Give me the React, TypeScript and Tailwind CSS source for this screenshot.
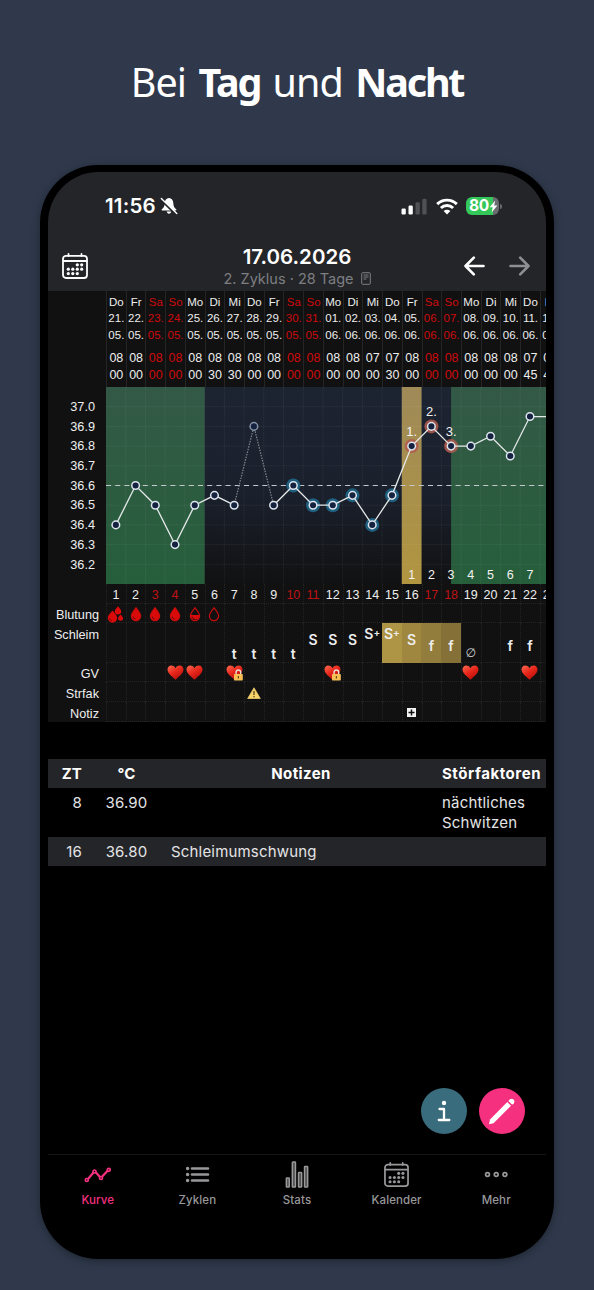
import { Fragment } from "react"

type Day = {
    day: number;
    name: string;
    date: string;
    month: string;
    hour: string;
    minute: string;
    temp: number;
    halo?: "blue" | "red";
    blood?: "heavy" | "full" | "half" | "empty";
    mucus?: string;
    mucusBg?: string;
    sex?: "heart" | "locked";
    high?: number;
}

const COL = 19.72

const days: Day[] = [
    { day: 1, name: "Do", date: "21.", month: "05.", hour: "08", minute: "00", temp: 36.4, blood: "heavy" },
    { day: 2, name: "Fr", date: "22.", month: "05.", hour: "08", minute: "00", temp: 36.6, blood: "full" },
    { day: 3, name: "Sa", date: "23.", month: "05.", hour: "08", minute: "00", temp: 36.5, blood: "full" },
    { day: 4, name: "So", date: "24.", month: "05.", hour: "08", minute: "00", temp: 36.3, blood: "full", sex: "heart" },
    { day: 5, name: "Mo", date: "25.", month: "05.", hour: "08", minute: "00", temp: 36.5, blood: "half", sex: "heart" },
    { day: 6, name: "Di", date: "26.", month: "05.", hour: "08", minute: "30", temp: 36.55, blood: "empty" },
    { day: 7, name: "Mi", date: "27.", month: "05.", hour: "08", minute: "30", temp: 36.5, mucus: "t", sex: "locked" },
    { day: 8, name: "Do", date: "28.", month: "05.", hour: "08", minute: "00", temp: 36.9, mucus: "t" },
    { day: 9, name: "Fr", date: "29.", month: "05.", hour: "08", minute: "00", temp: 36.5, mucus: "t" },
    { day: 10, name: "Sa", date: "30.", month: "05.", hour: "08", minute: "00", temp: 36.6, halo: "blue", mucus: "t" },
    { day: 11, name: "So", date: "31.", month: "05.", hour: "08", minute: "00", temp: 36.5, halo: "blue", mucus: "S" },
    { day: 12, name: "Mo", date: "01.", month: "06.", hour: "08", minute: "00", temp: 36.5, halo: "blue", mucus: "S", sex: "locked" },
    { day: 13, name: "Di", date: "02.", month: "06.", hour: "08", minute: "00", temp: 36.55, halo: "blue", mucus: "S" },
    { day: 14, name: "Mi", date: "03.", month: "06.", hour: "07", minute: "00", temp: 36.4, halo: "blue", mucus: "S+" },
    { day: 15, name: "Do", date: "04.", month: "06.", hour: "07", minute: "30", temp: 36.55, halo: "blue", mucus: "S+", mucusBg: "bg-[#ae9445]" },
    { day: 16, name: "Fr", date: "05.", month: "06.", hour: "08", minute: "00", temp: 36.8, halo: "red", mucus: "S", mucusBg: "bg-[#9f873f]", high: 1 },
    { day: 17, name: "Sa", date: "06.", month: "06.", hour: "08", minute: "00", temp: 36.9, halo: "red", mucus: "f", mucusBg: "bg-[#937d3c]", high: 2 },
    { day: 18, name: "So", date: "07.", month: "06.", hour: "08", minute: "00", temp: 36.8, halo: "red", mucus: "f", mucusBg: "bg-[#857138]", high: 3 },
    { day: 19, name: "Mo", date: "08.", month: "06.", hour: "08", minute: "00", temp: 36.8, mucus: "∅", sex: "heart", high: 4 },
    { day: 20, name: "Di", date: "09.", month: "06.", hour: "08", minute: "00", temp: 36.85, high: 5 },
    { day: 21, name: "Mi", date: "10.", month: "06.", hour: "08", minute: "00", temp: 36.75, mucus: "f", high: 6 },
    { day: 22, name: "Do", date: "11.", month: "06.", hour: "07", minute: "45", temp: 36.95, mucus: "f", sex: "heart", high: 7 },
    { day: 23, name: "Fr", date: "12.", month: "06.", hour: "07", minute: "45", temp: 36.95 },
]

const mucusPos: Record<string, string> = {
    "S+": "pt-[1px]",
    S: "pt-[7px]",
    f: "pt-[13px]",
    t: "pt-[21px]",
    "∅": "pt-[21px]",
}

const temps = ["37.0", "36.9", "36.8", "36.7", "36.6", "36.5", "36.4", "36.3", "36.2"]

const px = (day: number) => (day - 0.5) * COL
const py = (temp: number) => (37.1 - temp) * 197

const isWeekend = (d: Day) => d.name === "Sa" || d.name === "So"

const CalendarIcon = ({ className }: { className: string }) => (
    <svg viewBox="0 0 26 26" className={className} fill="none" stroke="currentColor" strokeWidth="1.8" strokeLinecap="round">
        <rect x="1" y="2.8" width="24" height="22.2" rx="3" />
        <path d="M1.5 8H24.5M6.5 1v2M19.5 1v2" />
        <g fill="currentColor" stroke="none">
            {[[15.3, 11.8], [19.7, 11.8], [6.3, 16.2], [10.8, 16.2], [15.3, 16.2], [19.7, 16.2], [6.3, 20.6], [10.8, 20.6], [15.3, 20.6]].map(([x, y]) => (
                <circle key={`${x}-${y}`} cx={x} cy={y} r="1.6" />
            ))}
        </g>
    </svg>
)

const DROP = "M6 .8C7.5 3.2 10.6 6 10.6 9a4.6 4.6 0 0 1-9.2 0C1.4 6 4.5 3.2 6 .8Z"

const Blood = ({ kind }: { kind: string }) => {
    if (kind === "heavy") {
        return (
            <svg viewBox="0 0 17 17" className="w-[17px] h-[17px] shrink-0" fill="#db0a0a">
                <path d="M5.5 4.5C6.8 6.5 10.2 9 10.2 12a4.7 4.7 0 0 1-9.4 0C.8 9 4.2 6.5 5.5 4.5Z" />
                <path d="M11 .3c.8 1.4 3.2 2.9 3.2 4.9a3.2 3.2 0 0 1-6.4 0C7.8 3.2 10.2 1.7 11 .3Z" />
                <path d="M13.6 8.4c.7 1.1 2.5 2.2 2.5 3.8a2.5 2.5 0 0 1-5 0c0-1.6 1.8-2.7 2.5-3.8Z" />
                <path d="M2.7 12.2a2.6 2.6 0 0 0 2.3 2.6" fill="none" stroke="#6b0a0a" strokeWidth=".8" />
            </svg>
        )
    }
    return (
        <svg viewBox="0 0 12 15" className="w-[12px] h-[15px] shrink-0">
            <path d={DROP} fill={kind === "full" ? "#db0a0a" : "none"} stroke="#c90c0c" strokeWidth="1.2" />
            {kind === "half" && <path d="M1.4 8h9.2a4.6 4.6 0 1 1-9.2 0Z" fill="#db0a0a" />}
            {kind !== "empty" && <path d="M3.2 9.5a2.8 2.8 0 0 0 2.3 2.5" fill="none" stroke="#5f0a0a" strokeWidth=".9" />}
        </svg>
    )
}

const Heart = ({ locked }: { locked: boolean }) => (
    <svg viewBox="0 0 17 16" className="w-[17px] h-[16px] shrink-0">
        <defs>
            <linearGradient id="heart" x1="0" y1="0" x2="0.7" y2="1">
                <stop offset="0" stopColor="#ff6a52" />
                <stop offset=".5" stopColor="#e8281c" />
                <stop offset="1" stopColor="#b50d0a" />
            </linearGradient>
        </defs>
        <path d="M8.5 3.2C9.6 1.2 11.3.6 12.8.6c2.200 0 3.700 1.700 3.700 4 0 4.200-5.200 7.400-8 10.200C5.700 12 .5 8.800.5 4.600c0-2.300 1.500-4 3.700-4 1.500 0 3.200.6 4.300 2.600Z" fill="url(#heart)" />
        {locked && (
            <>
                <path d="M10.100 9.500V7.300a2.300 2.300 0 0 1 4.600 0v2.200" fill="none" stroke="#e9dcd0" strokeWidth="1.4" />
                <rect x="8" y="9" width="8.8" height="6.5" rx=".7" fill="#f8bf55" />
                <path d="M12.400 11v2.400" stroke="#6b4a10" strokeWidth="1.2" />
            </>
        )}
    </svg>
)

const Header = () => (
    <div className="h-[119px] bg-[#242528] text-white">
        <div className="h-[66px] flex items-center justify-between pl-[57px] pr-[47px] pt-[2px]">
            <div className="flex items-center gap-[4px]">
                <span className="text-[20.5px] font-semibold tracking-[0.2px]">11:56</span>
                <svg viewBox="0 0 18 18" className="w-[18px] h-[18px]">
                    <path d="M9 1C6.500 1.200 4.800 3 4.700 6c-.1 3.500-1.200 4.900-2.900 6.300-.4.400-.3 1.200.5 1.200h13.400c.8 0 .9-.8.500-1.200-1.700-1.400-2.800-2.800-2.900-6.300-.1-3-1.800-4.800-4.300-5ZM6.600 14.600c.3 1.200 1.200 2.100 2.400 2.100s2.100-.9 2.400-2.100Z" fill="#fff" />
                    <path d="M1.600 3.400 15.400 16.700" stroke="#242528" strokeWidth="2.2" />
                    <path d="M1.300 1.600 16.800 16.500" stroke="#fff" strokeWidth="1.4" strokeLinecap="round" />
                </svg>
            </div>
            <div className="flex items-center">
                <svg viewBox="0 0 26 17" className="w-[26px] h-[17px]">
                    <rect x="0.5" y="10.5" width="4.3" height="6" rx="1.2" fill="#fff" />
                    <rect x="7.5" y="7.5" width="4.3" height="9" rx="1.2" fill="#fff" />
                    <rect x="14.5" y="4.2" width="4.3" height="12.3" rx="1.2" fill="#505154" />
                    <rect x="21.3" y="0.8" width="4.3" height="15.7" rx="1.2" fill="#505154" />
                </svg>
                <svg viewBox="0 0 22 17" className="w-[22px] h-[17px] ml-[9px]" fill="none" stroke="#fff" strokeWidth="2.9">
                    <path d="M1.2 6.1a14 14 0 0 1 19.6 0" />
                    <path d="M4.9 10a8.7 8.7 0 0 1 12.2 0" />
                    <path d="M11 16.5 7.6 13.1a4.9 4.9 0 0 1 6.8 0Z" fill="#fff" stroke="none" />
                </svg>
                <div className="ml-[8px] relative w-[33px] h-[18px] rounded-[6px] bg-gradient-to-r from-[#34c759] from-[81%] to-[#6a6b6e] to-[81%] flex items-center">
                    <span className="text-[15.5px] font-bold tracking-[-0.3px] pl-[3px]">80</span>
                    <svg viewBox="0 0 9 13" className="w-[9px] h-[13px]">
                        <path d="M6.2.5.6 7.3h3.1L2.6 12.5 8.4 5.5H5.2Z" fill="#fff" />
                    </svg>
                    <span className="absolute -right-[3px] top-[7px] w-[2px] h-[5px] rounded-r bg-[#6a6b6e]" />
                </div>
            </div>
        </div>
        <div className="h-[53px] grid grid-cols-[1fr_auto_1fr] items-center px-[14px]">
            <CalendarIcon className="w-[26px] h-[26px] mt-[2px]" />
            <div className="text-center">
                <h1 className="text-[20.5px] leading-[24px] font-semibold mt-[4px]">17.06.2026</h1>
                <div className="flex items-center justify-center gap-[7px] text-[#7d7e82]">
                    <span className="text-[14.5px] leading-[20px]">2. Zyklus · 28 Tage</span>
                    <svg viewBox="0 0 10 13" className="w-[10px] h-[13px]" fill="none" stroke="currentColor">
                        <rect x=".7" y=".7" width="8.6" height="11.6" rx="1" />
                        <path d="M2.5 3h5M2.5 5h5M2.5 7h3" />
                    </svg>
                </div>
            </div>
            <div className="flex justify-end gap-[24px] pr-[2px]">
                <svg viewBox="0 0 21 20" className="w-[21px] h-[20px] mt-[2px]" fill="none" stroke="#fff" strokeWidth="2.6" strokeLinecap="round" strokeLinejoin="round">
                    <path d="M19.5 10H1.5M9.8 1.7 1.5 10l8.3 8.3" />
                </svg>
                <svg viewBox="0 0 21 20" className="w-[21px] h-[20px] mt-[2px]" fill="none" stroke="#8e8f92" strokeWidth="2.6" strokeLinecap="round" strokeLinejoin="round">
                    <path d="M1.5 10h18M11.2 1.7 19.5 10l-8.3 8.3" />
                </svg>
            </div>
        </div>
    </div>
)

const Plot = () => {
    const before = days.filter((d) => d.day <= 7)
    const after = days.filter((d) => d.day >= 9)
    const toPoints = (list: Day[]) => list.map((d) => `${px(d.day)},${py(d.temp)}`).join(" ")

    return (
        <svg viewBox="0 0 440 197" className="w-[440px] h-[197px] block shrink-0">
            <defs>
                <linearGradient id="night" x1="0" y1="0" x2="0" y2="1">
                    <stop offset="0" stopColor="#1d2431" />
                    <stop offset=".55" stopColor="#1a202c" />
                    <stop offset="1" stopColor="#111112" />
                </linearGradient>
                <linearGradient id="green" x1="0" y1="0" x2="0" y2="1">
                    <stop offset="0" stopColor="#335946" />
                    <stop offset="1" stopColor="#265e3b" />
                </linearGradient>
                <linearGradient id="gold" x1="0" y1="0" x2="0" y2="1">
                    <stop offset="0" stopColor="#9f8a58" />
                    <stop offset="1" stopColor="#b19540" />
                </linearGradient>
            </defs>
            <rect width="440" height="197" fill="url(#night)" />
            <rect width={COL * 5} height="197" fill="url(#green)" />
            <rect x={COL * 17.5} width="96" height="197" fill="url(#green)" />
            <rect x={COL * 15} width={COL} height="197" fill="url(#gold)" />
            <g stroke="#fff" strokeOpacity=".07" strokeDasharray="1.5 1">
                {temps.map((t) => <line key={t} x1="0" x2="440" y1={py(+t)} y2={py(+t)} />)}
                {days.map((d) => <line key={d.day} x1={d.day * COL} x2={d.day * COL} y1="0" y2="197" />)}
            </g>
            <line x1="0" x2="440" y1={py(36.6)} y2={py(36.6)} stroke="#c4c9cd" strokeWidth="1.2" strokeDasharray="5 4.2" />
            {days.filter((d) => d.halo).map((d) => (
                <circle key={d.day} cx={px(d.day)} cy={py(d.temp)} r="7" fill={d.halo === "blue" ? "#1f5f7f" : "#b25a4e"} fillOpacity={d.halo === "blue" ? 1 : 0.85} />
            ))}
            <g fill="none" stroke="#e6e9ea" strokeWidth="1.3">
                <polyline points={toPoints(before)} />
                <polyline points={toPoints(after)} />
            </g>
            <polyline points={toPoints(days.slice(6, 9))} fill="none" stroke="#83878f" strokeWidth="1.2" strokeDasharray="1.5 1.2" />
            {days.slice(0, 22).map((d) => (
                <circle
                    key={d.day}
                    cx={px(d.day)}
                    cy={py(d.temp)}
                    r="3.8"
                    fill="#14213f"
                    stroke={d.day === 8 ? "#8592a5" : "#dde5ee"}
                    strokeWidth="1.5"
                />
            ))}
            <g fill="#f2f2f2" fontFamily="Liberation Sans, Arial, sans-serif" textAnchor="middle">
                {days.filter((d) => d.high && d.high < 4).map((d) => (
                    <text key={d.day} x={px(d.day)} y={py(d.temp) - 10} fontSize="13">{d.high}.</text>
                ))}
                {days.filter((d) => d.high).map((d) => (
                    <text key={d.day} x={px(d.day)} y="191.5" fontSize="12.5">{d.high}</text>
                ))}
            </g>
        </svg>
    )
}

const Row = ({ height, render }: { height: string; render: (d: Day) => React.ReactNode }) => (
    <div className={`flex ${height}`}>
        {days.map((d) => (
            <div
                key={d.day}
                className={`w-[19.72px] shrink-0 flex justify-center border-l border-b border-dotted border-[#232323] ${height}`}
            >
                {render(d)}
            </div>
        ))}
    </div>
)

const Chart = () => (
    <div className="flex h-[431px] bg-[#111112] font-['Liberation_Sans',Arial,sans-serif] text-[#eeeeee] overflow-hidden">
        {/* Labels */}
        <div className="w-[58px] shrink-0 text-[12.7px] text-right">
            <div className="mt-[106px] pr-[11px]">
                {temps.map((t) => (
                    <div key={t} className="h-[19.7px] leading-[20px]">{t}</div>
                ))}
            </div>
            <div className="mt-[31px] pr-[7px] leading-[20px] -ml-[4px]">
                <div className="h-[19.7px] mt-[1px]">Blutung</div>
                <div className="h-[39.4px]">Schleim</div>
                <div className="h-[19.7px]">GV</div>
                <div className="h-[19.7px]">Strfak</div>
                <div className="h-[19.7px]">Notiz</div>
            </div>
        </div>
        {/* Days */}
        <div className="w-[440px] shrink-0 overflow-hidden">
            <div className="flex h-[96px]">
                {days.map((d) => (
                    <div
                        key={d.day}
                        className={`w-[19.72px] shrink-0 flex flex-col items-center border-l border-[#252525] pt-[3px] text-[11.5px] leading-[16.4px] ${isWeekend(d) ? "text-[#cf0a0a]" : ""}`}
                    >
                        <span>{d.name}</span>
                        <span>{d.date}</span>
                        <span>{d.month}</span>
                        <span className="mt-[7px] text-[12.5px]">{d.hour}</span>
                        <span className="text-[12.5px] leading-[16px]">{d.minute}</span>
                    </div>
                ))}
            </div>
            <Plot />
            <Row
                height="h-[19.7px]"
                render={(d) => (
                    <span className={`text-[12.5px] leading-[22px] -ml-[1px] ${isWeekend(d) ? "text-[#bf1212]" : ""}`}>{d.day}</span>
                )}
            />
            <Row
                height="h-[19.7px]"
                render={(d) => (
                    <div className="h-full flex items-center pt-[3px] -ml-[1px]">{d.blood && <Blood kind={d.blood} />}</div>
                )}
            />
            <Row
                height="h-[39.4px]"
                render={(d) => (
                    <div className={`w-[20.3px] h-[39.4px] -ml-[1px] shrink-0 flex justify-center text-[14px] leading-[19px] font-semibold font-[Inter,sans-serif] ${d.mucusBg ?? ""} ${d.mucus ? mucusPos[d.mucus] : ""}`}>
                        {d.mucus === "S+" ? (
                            <Fragment>S<span className="text-[10px] leading-[16px]">+</span></Fragment>
                        ) : d.mucus === "∅" ? (
                            <span className="font-['DejaVu_Sans',sans-serif] font-normal text-[12px] text-[#cccccc]">∅</span>
                        ) : d.mucus}
                    </div>
                )}
            />
            <Row
                height="h-[19.7px]"
                render={(d) => (
                    <div className="h-full flex items-center pt-[2px] -ml-[1px]">{d.sex && <Heart locked={d.sex === "locked"} />}</div>
                )}
            />
            <Row
                height="h-[19.7px]"
                render={(d) => d.day === 8 && (
                    <svg viewBox="0 0 14 12" className="w-[14px] h-[12px] mt-[5px] shrink-0">
                        <path d="M7 .8 13.3 11.500H.7Z" fill="#f6d36b" stroke="#e9c96b" strokeWidth=".8" strokeLinejoin="round" />
                        <path d="M7 4v4M7 9v1.300" stroke="#4d3c10" strokeWidth="1.2" />
                    </svg>
                )}
            />
            <Row
                height="h-[19.7px]"
                render={(d) => d.day === 16 && (
                    <svg viewBox="0 0 9 9" className="w-[9px] h-[9px] mt-[6px] -ml-[1px] shrink-0">
                        <rect width="9" height="9" fill="#f4f4f4" />
                        <path d="M4.5 1.500v6M1.500 4.500h6" stroke="#111" strokeWidth="1.5" />
                    </svg>
                )}
            />
        </div>
    </div>
)

const NotesTable = () => (
    <table className="mt-[37px] w-[498px] table-fixed text-[15px] leading-[20px] tracking-[0.18px] text-[#e4e4e6]">
        <colgroup>
            <col className="w-[45px]" />
            <col className="w-[67px]" />
            <col className="w-[282px]" />
            <col className="w-[104px]" />
        </colgroup>
        <thead>
            <tr className="bg-[#242528] h-[29px] text-white">
                <th className="font-bold text-right pr-[11px]">ZT</th>
                <th className="font-bold">°C</th>
                <th className="font-bold tracking-[0.4px]">Notizen</th>
                <th className="font-bold text-left whitespace-nowrap tracking-[0.55px]">Störfaktoren</th>
            </tr>
        </thead>
        <tbody>
            <tr className="h-[49px] align-top">
                <td className="text-right pr-[11px] pt-[5px]">8</td>
                <td className="text-center pt-[5px]">36.90</td>
                <td />
                <td className="pt-[5px]">nächtliches Schwitzen</td>
            </tr>
            <tr className="h-[29px] bg-[#242528]">
                <td className="text-right pr-[11px]">16</td>
                <td className="text-center">36.80</td>
                <td className="pl-[11px]">Schleimumschwung</td>
                <td />
            </tr>
        </tbody>
    </table>
)

const tabs = [
    {
        label: "Kurve",
        icon: (
            <svg viewBox="0 0 28 28" className="w-[28px] h-[28px]" fill="none" stroke="currentColor" strokeWidth="1.7">
                <path d="M4 18 9.5 11.5M11.5 11l4.500 5M18 15.700l5.600-6" strokeWidth="2.2" />
                <circle cx="2.8" cy="19" r="1.5" /><circle cx="10.5" cy="10.5" r="1.5" />
                <circle cx="17" cy="17" r="1.5" /><circle cx="24.8" cy="8.8" r="1.5" />
            </svg>
        ),
    },
    {
        label: "Zyklen",
        icon: (
            <svg viewBox="0 0 28 28" className="w-[28px] h-[28px]" stroke="currentColor" strokeWidth="2.6" strokeLinecap="round">
                <path d="M9 7.500h16M9 13.500h16M9 19.500h16" />
                <path d="M4.500 7.500h.2M4.500 13.500h.2M4.500 19.500h.2" strokeWidth="3.3" />
            </svg>
        ),
    },
    {
        label: "Stats",
        icon: (
            <svg viewBox="0 0 28 28" className="w-[28px] h-[28px]" fill="#555" stroke="currentColor" strokeWidth="1.4">
                <rect x="3.3" y="17" width="3" height="9" rx=".6" />
                <rect x="9.3" y="1" width="3.2" height="25" rx=".6" />
                <rect x="15.5" y="11.5" width="3.2" height="14.5" rx=".6" />
                <rect x="21.5" y="5.5" width="3.2" height="20.5" rx=".6" />
            </svg>
        ),
    },
    { label: "Kalender", icon: <CalendarIcon className="w-[25px] h-[25px]" /> },
    {
        label: "Mehr",
        icon: (
            <svg viewBox="0 0 28 28" className="w-[28px] h-[28px]" fill="none" stroke="currentColor" strokeWidth="1.7">
                <circle cx="5.5" cy="13.5" r="1.9" /><circle cx="14.2" cy="13.5" r="1.9" /><circle cx="22.9" cy="13.5" r="1.9" />
            </svg>
        ),
    },
]

const TabBar = () => (
    <div className="h-[98px] border-t border-[#151515] grid grid-cols-5 items-start pt-[5px]">
        {tabs.map((tab, i) => (
            <div key={tab.label} className={`flex flex-col items-center ${i === 0 ? "text-[#f5317f]" : "text-[#98989b]"}`}>
                <div className="h-[29px] flex items-center">{tab.icon}</div>
                <span className="text-[11.5px] leading-[16px] mt-[2.5px] tracking-[0.1px] font-medium">{tab.label}</span>
            </div>
        ))}
    </div>
)

const App = () => {
    return (
        <div className="w-[594px] h-[1290px] overflow-hidden bg-[#2f394b] flex flex-col items-center font-[Inter,sans-serif]">
            <div className="h-[165px] flex items-center justify-center text-white font-['Noto_Sans',sans-serif] text-[39.5px] tracking-[-0.9px] [word-spacing:3px] whitespace-nowrap">
                <p>Bei <b className="tracking-[-2.2px]">Tag</b> und <b className="tracking-[-2.2px]">Nacht</b></p>
            </div>
            {/* Phone */}
            <div className="w-[514px] h-[1094px] shrink-0 rounded-[58px] border-x-8 border-y-7 border-black bg-black overflow-hidden flex flex-col shadow-[0_2px_9px_rgba(0,0,0,0.35)]">
                <Header />
                <Chart />
                <NotesTable />
                {/* Buttons */}
                <div className="mt-auto mb-[20px] pr-[21px] flex justify-end gap-[12px]">
                    <button className="w-[46px] h-[46px] rounded-full bg-[#396d7d] flex items-center justify-center">
                        <svg viewBox="0 0 14 22" className="w-[14px] h-[22px]" fill="none" stroke="#fff" strokeWidth="2.3" strokeLinecap="round" strokeLinejoin="round">
                            <path d="M2.5 9H7v11M1.800 20h10.500" />
                            <circle cx="7" cy="3" r="2.2" fill="#fff" stroke="none" />
                        </svg>
                    </button>
                    <button className="w-[46px] h-[46px] rounded-full bg-[#f5307e] flex items-center justify-center">
                        <svg viewBox="0 0 28 28" className="w-[28px] h-[28px]" fill="#fff">
                            <path d="M19.3 5 23 8.700 5.500 26.200 1 27.200 2 22.500Z" />
                            <path d="M20.4 3.900 22 2.300a2.800 2.800 0 0 1 3.900 3.900l-1.700 1.500Z" />
                        </svg>
                    </button>
                </div>
                <TabBar />
            </div>
        </div>
    )
}

export default App
